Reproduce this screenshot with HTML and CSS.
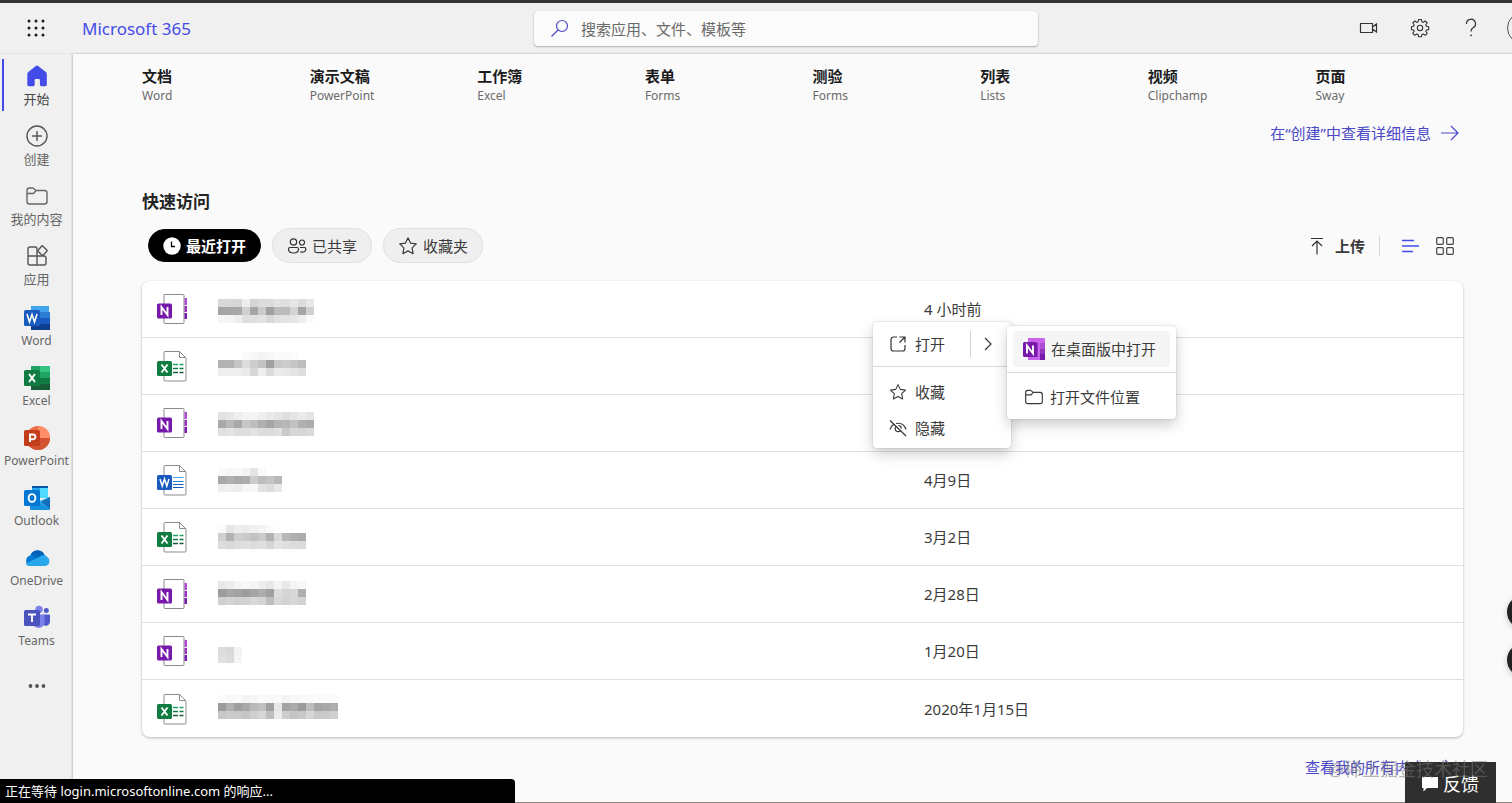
FILE: index.html
```html
<!DOCTYPE html>
<html lang="zh-CN">
<head>
<meta charset="utf-8">
<title>Microsoft 365</title>
<link rel="stylesheet" href="styles.css">
</head>
<body>
<svg class="defs" aria-hidden="true">
  <symbol id="note" viewBox="0 0 32 32">
    <path d="M8 1.500h19a1 1 0 0 1 1 1v27a1 1 0 0 1-1 1H9a1 1 0 0 1-1-1v-27z" fill="#fff" stroke="#8b8b8b"/>
    <path d="M28.500 5h2.500v7h-2.500z" fill="#ae4bd5"/><path d="M28.500 13h2.500v6h-2.500z" fill="#9332bf"/><path d="M28.500 20h2.500v6h-2.500z" fill="#7719aa"/>
    <rect x="1" y="10.500" width="15" height="15" rx="1.500" fill="#7719aa"/>
    <path d="M5.500 22v-8l6 8v-8" fill="none" stroke="#fff" stroke-width="1.900"/>
  </symbol>
  <symbol id="sheet" viewBox="0 0 32 32">
    <path d="M8.500 1.500h15l6.500 6.500v22a1 1 0 0 1-1 1h-20a1 1 0 0 1-1-1v-28z" fill="#fff" stroke="#8b8b8b"/><path d="M23.500 1.500v6h6.500" fill="none" stroke="#8b8b8b"/>
    <path d="M17 14.500h5m1.500 0h4" stroke="#21a366" stroke-width="1.700"/><path d="M17 18.500h5m1.500 0h4" stroke="#107c41" stroke-width="1.700"/><path d="M17 22.500h5m1.500 0h4" stroke="#185c37" stroke-width="1.700"/>
    <rect x="1" y="11" width="15" height="15" rx="1.500" fill="#107c41"/>
    <path d="M5.500 14.500l6 8m0-8l-6 8" stroke="#fff" stroke-width="1.900"/>
  </symbol>
  <symbol id="doc" viewBox="0 0 32 32">
    <path d="M8.500 1.500h15l6.500 6.500v22a1 1 0 0 1-1 1h-20a1 1 0 0 1-1-1v-28z" fill="#fff" stroke="#8b8b8b"/><path d="M23.500 1.500v6h6.500" fill="none" stroke="#8b8b8b"/>
    <path d="M17 13.500h10.500" stroke="#41a5ee"/><path d="M17 17.500h10.500" stroke="#2b7cd3"/><path d="M17 20.500h10.500M17 23.500h10.500" stroke="#185abd"/>
    <rect x="1" y="11" width="15" height="15" rx="1.500" fill="#185abd"/>
    <path d="M4 15l2.200 7 2.300-7 2.300 7 2.200-7" fill="none" stroke="#fff" stroke-width="1.500"/>
  </symbol>
  <symbol id="star" viewBox="0 0 20 20"><path d="M10 1.800l2.500 5.300 5.800.8-4.200 4 1 5.800-5.100-2.800-5.100 2.800 1-5.800-4.200-4 5.800-.8z" fill="none" stroke="currentColor" stroke-width="1.200" stroke-linejoin="round"/></symbol>
  <symbol id="folder" viewBox="0 0 24 24"><path d="M2 6.500A2.500 2.500 0 0 1 4.500 4H8l3 2.500h8.500A2.500 2.500 0 0 1 22 9v8.500a2.500 2.500 0 0 1-2.500 2.500h-15A2.500 2.500 0 0 1 2 17.500zM2 9.500h6.500l2.500-3" fill="none" stroke="currentColor" stroke-width="1.400" stroke-linejoin="round"/></symbol>
</svg>

<header class="topbar">
  <button class="waffle" aria-label="应用启动器"><svg width="18" height="18" viewBox="0 0 18 18" fill="#1b1b1b"><circle cx="2" cy="2" r="1.500"/><circle cx="9" cy="2" r="1.500"/><circle cx="16" cy="2" r="1.500"/><circle cx="2" cy="9" r="1.500"/><circle cx="9" cy="9" r="1.500"/><circle cx="16" cy="9" r="1.500"/><circle cx="2" cy="16" r="1.500"/><circle cx="9" cy="16" r="1.500"/><circle cx="16" cy="16" r="1.500"/></svg></button>
  <a class="brand" href="#">Microsoft 365</a>
  <form class="search">
    <svg width="18" height="18" viewBox="0 0 18 18" fill="none" stroke="#4b48c8" stroke-width="1.200"><circle cx="11" cy="7" r="5.500"/><path d="M7 11l-6.500 6.500"/></svg>
    <input type="text" aria-label="搜索" placeholder="搜索应用、文件、模板等">
  </form>
  <div class="tools">
    <button aria-label="会议"><svg width="20" height="20" viewBox="0 0 20 20" fill="none" stroke="#333" stroke-width="1.200"><path d="M1.500 5.500h12v9h-12zM13.500 9l4-3v8l-4-3"/></svg></button>
    <button aria-label="设置"><svg width="20" height="20" viewBox="0 0 20 20" fill="none" stroke="#333" stroke-width="1.100" stroke-linejoin="round"><path d="M8.500 1.500h3l.4 2.300 1.300.6 2-1.400 2 2-1.400 2 .6 1.300 2.300.4v2.900l-2.300.4-.6 1.300 1.400 2-2 2-2-1.400-1.300.6-.4 2.200h-3l-.4-2.200-1.300-.6-2 1.400-2-2 1.400-2-.6-1.300-2.200-.4V8.700l2.200-.4.600-1.300-1.400-2 2-2 2 1.400 1.300-.6z"/><circle cx="10" cy="10" r="2.700"/></svg></button>
    <button aria-label="帮助"><svg width="20" height="20" viewBox="0 0 20 20" fill="none" stroke="#333" stroke-width="1.200"><path d="M5.500 6A4.500 4.500 0 1 1 12 9.800c-1.500 1-2 1.700-2 3.700"/><circle cx="10" cy="17.300" r=".9" fill="#333" stroke="none"/></svg></button>
    <button class="avatar" aria-label="帐户"></button>
  </div>
</header>

<div class="shell">
  <nav class="rail" aria-label="应用">
    <a class="active" href="#"><svg width="24" height="24" viewBox="0 0 24 24"><path d="M10.800 2a2 2 0 0 1 2.400 0l7.300 5.700c.9.700 1.300 1.500 1.300 2.600v10.200c0 1.200-.6 1.700-1.700 1.700h-3.500c-1 0-1.700-.6-1.700-1.700v-4.300c0-.8-.5-1.200-1.200-1.200h-2.800c-.7 0-1.200.4-1.200 1.200v4.300c0 1.100-.7 1.700-1.700 1.700H4c-1.200 0-1.700-.5-1.700-1.700V10.300c0-1.100.4-1.900 1.300-2.600z" fill="#444ce7"/></svg><span>开始</span></a>
    <a href="#"><svg width="24" height="24" viewBox="0 0 24 24" fill="none" stroke="#555" stroke-width="1.400"><circle cx="12" cy="12" r="10"/><path d="M12 7v10M7 12h10"/></svg><span>创建</span></a>
    <a href="#"><svg width="24" height="24"><use href="#folder"/></svg><span>我的内容</span></a>
    <a href="#"><svg width="24" height="24" viewBox="0 0 24 24" fill="none" stroke="#555" stroke-width="1.400" stroke-linejoin="round"><path d="M12 12V5a2 2 0 0 0-2-2H5a2 2 0 0 0-2 2v14a2 2 0 0 0 2 2h14a2 2 0 0 0 2-2v-5a2 2 0 0 0-2-2zM12 12v9M3 12h9"/><path d="M17.500 1.800l4.200 4.200a1 1 0 0 1 0 1.400l-3.500 3.500a1 1 0 0 1-1.400 0l-3.500-3.500a1 1 0 0 1 0-1.400l3.500-4a.5.500 0 0 1 .7-.2z" fill="#f0f0f0"/></svg><span>应用</span></a>
    <a href="#"><svg width="26" height="26" viewBox="0 0 26 26"><path d="M7 1h18v6H7z" fill="#41a5ee"/><path d="M7 7h19v6H7z" fill="#2b7cd3"/><path d="M7 13h19v6H7z" fill="#185abd"/><path d="M7 19h19v6H7z" fill="#103f91"/><rect y="5" width="16" height="16" rx="1.500" fill="#185abd"/><path d="M3 9l2.500 8L8 9.500l2.500 7.500L13 9" fill="none" stroke="#fff" stroke-width="1.600"/></svg><span>Word</span></a>
    <a href="#"><svg width="26" height="26" viewBox="0 0 26 26"><path d="M7 1h19v24H7z" fill="#21a366"/><path d="M16 1h10v6H16z" fill="#33c481"/><path d="M7 7h9v6H7z" fill="#107c41"/><path d="M7 13h9v12H7zM16 19h10v6H16z" fill="#185c37"/><path d="M16 13h10v6H16z" fill="#107c41"/><rect y="5" width="16" height="16" rx="1.500" fill="#107c41"/><path d="M5 9l6 8m0-8l-6 8" stroke="#fff" stroke-width="2"/></svg><span>Excel</span></a>
    <a href="#"><svg width="26" height="26" viewBox="0 0 26 26"><circle cx="14" cy="13" r="12" fill="#ed6c47"/><path d="M14 1a12 12 0 0 1 12 12H14z" fill="#ff8f6b"/><path d="M2 13h24a12 12 0 0 1-24 0z" fill="#d35230"/><rect y="5" width="16" height="16" rx="1.500" fill="#c43e1c"/><path d="M6 17V9.500h3a2.400 2.400 0 0 1 0 4.800H6" fill="none" stroke="#fff" stroke-width="1.900"/></svg><span>PowerPoint</span></a>
    <a href="#"><svg width="26" height="26" viewBox="0 0 26 26"><path d="M8 1h16v12H8z" fill="#28a8ea"/><path d="M8 1h16v2H8z" fill="#0358a7"/><path d="M16 3h8v10h-8z" fill="#50d9ff"/><path d="M8 9h8v8H8z" fill="#0078d4"/><path d="M26 12v12a1 1 0 0 1-1 1H7a1 1 0 0 1-1-1V12l10 6z" fill="#1490df"/><path d="M26 12v12L13 17z" fill="#28a8ea"/><path d="M26 12l-9 5 9 7z" fill="#0f6fbd"/><rect y="5" width="16" height="16" rx="1.500" fill="#0078d4"/><ellipse cx="8" cy="13" rx="3.400" ry="3.900" fill="none" stroke="#fff" stroke-width="1.900"/></svg><span>Outlook</span></a>
    <a href="#"><svg width="26" height="26" viewBox="0 0 26 26"><path d="M6 11a8 8 0 0 1 14.500-1A6.500 6.500 0 0 1 21 21H6A5.500 5.500 0 0 1 6 10.500z" fill="#0078d4"/><path d="M7 9a7.500 7.500 0 0 1 13.500 1c-2 0-3 .5-4 1.200L13 13z" fill="#0364b8"/><path d="M16 11.500a6 6 0 0 1 9 7A5 5 0 0 1 21 21H6a5.500 5.500 0 0 1-4.500-2.300z" fill="#28a8ea"/></svg><span>OneDrive</span></a>
    <a href="#"><svg width="26" height="26" viewBox="0 0 26 26"><circle cx="22.300" cy="5.500" r="2.500" fill="#5059c9"/><circle cx="15" cy="4.500" r="3.700" fill="#7b83eb"/><path d="M19 9.500h6a1 1 0 0 1 1 1V16a4.500 4.500 0 0 1-7 4z" fill="#5059c9"/><path d="M9 9.500h10.500a1 1 0 0 1 1 1V17a6 6 0 0 1-12 0z" fill="#7b83eb"/><rect y="5" width="16" height="16" rx="1.500" fill="#4b53bc"/><path d="M4 9.500h8M8 9.500V17" stroke="#fff" stroke-width="1.900"/></svg><span>Teams</span></a>
    <button aria-label="更多"><svg width="18" height="6" viewBox="0 0 18 6" fill="#555"><circle cx="2.500" cy="3" r="1.900"/><circle cx="9" cy="3" r="1.900"/><circle cx="15.500" cy="3" r="1.900"/></svg></button>
  </nav>

  <main class="content">
    <section class="create">
      <a href="#"><strong>文档</strong><span>Word</span></a>
      <a href="#"><strong>演示文稿</strong><span>PowerPoint</span></a>
      <a href="#"><strong>工作簿</strong><span>Excel</span></a>
      <a href="#"><strong>表单</strong><span>Forms</span></a>
      <a href="#"><strong>测验</strong><span>Forms</span></a>
      <a href="#"><strong>列表</strong><span>Lists</span></a>
      <a href="#"><strong>视频</strong><span>Clipchamp</span></a>
      <a href="#"><strong>页面</strong><span>Sway</span></a>
    </section>
    <a class="more" href="#">在“创建”中查看详细信息<svg width="18" height="18" viewBox="0 0 18 18"><path d="M0 9h17M10 2l7 7-7 7" fill="none" stroke="currentColor" stroke-width="1.200"/></svg></a>
    <h2>快速访问</h2>
    <div class="bar">
      <div class="tabs">
        <button class="tab selected"><svg width="18" height="18" viewBox="0 0 18 18"><circle cx="9" cy="9" r="8.700" fill="#fff"/><path d="M8.500 4.500v5H12" fill="none" stroke="#000" stroke-width="1.300"/></svg>最近打开</button>
        <button class="tab"><svg width="20" height="18" viewBox="0 0 20 18" fill="none" stroke="#333" stroke-width="1.200"><circle cx="6.500" cy="5" r="3.200"/><circle cx="15" cy="5.500" r="2.500"/><path d="M3 10.500h7a1.500 1.500 0 0 1 1.500 1.500c0 2.500-2 4-5 4s-5-1.500-5-4A1.500 1.500 0 0 1 3 10.500zM13 10.500h4.500a1.300 1.300 0 0 1 1.300 1.500c0 2-1.800 3.200-3.800 3.200-.8 0-1.500-.1-2-.4"/></svg>已共享</button>
        <button class="tab"><svg width="20" height="20"><use href="#star"/></svg>收藏夹</button>
      </div>
      <div class="views">
        <button class="upload"><svg width="14" height="20" viewBox="0 0 14 20"><path d="M1 2.500h12M7 18.500V5M2 10l5-5 5 5" fill="none" stroke="#333" stroke-width="1.200"/></svg>上传</button>
        <button aria-label="列表视图"><svg width="18" height="16" viewBox="0 0 18 16"><path d="M1 2.500h12M1 8h17M1 13.500h11" stroke="#444ce7" stroke-width="1.500"/></svg></button>
        <button aria-label="网格视图"><svg width="18" height="18" viewBox="0 0 18 18" fill="none" stroke="#444" stroke-width="1.200"><rect x=".7" y=".7" width="6.600" height="6.600" rx="1"/><rect x="10.700" y=".7" width="6.600" height="6.600" rx="1"/><rect x=".7" y="10.700" width="6.600" height="6.600" rx="1"/><rect x="10.700" y="10.700" width="6.600" height="6.600" rx="1"/></svg></button>
      </div>
    </div>

    <table class="files">
      <tbody>
        <tr><td class="kind"><svg width="32" height="32"><use href="#note"/></svg></td><td class="name"><svg class="mosaic" width="132" height="32" data-row="0"></svg></td>
          <td class="date">4 小时前
            <div class="menu">
              <div class="split">
                <button class="item"><svg width="18" height="18" viewBox="0 0 18 18" fill="none" stroke="#333" stroke-width="1.200"><path d="M8 2H4.500A2.500 2.500 0 0 0 2 4.500v9A2.500 2.500 0 0 0 4.500 16h9a2.500 2.500 0 0 0 2.500-2.500V10M10.500 2H16v5.500M16 2l-5.500 5.500"/></svg>打开</button>
                <button class="expand" aria-label="更多打开方式"><svg width="8" height="14" viewBox="0 0 8 14"><path d="M1 1l6 6-6 6" fill="none" stroke="#333" stroke-width="1.200"/></svg></button>
              </div>
              <div class="group">
                <button class="item"><svg width="18" height="18"><use href="#star"/></svg>收藏</button>
                <button class="item"><svg width="18" height="18" viewBox="0 0 18 18" fill="none" stroke="#333" stroke-width="1.200"><path d="M1 1.500L17 17M7 4.500C12 3.500 15.500 6 17 10.500M4.500 5.500C2.500 6.800 1.500 8.500 1 10.500M11.500 11.500A3 3 0 1 1 7.300 7.300M9.500 6.500a3 3 0 0 1 2.800 3"/></svg>隐藏</button>
              </div>
              <div class="submenu">
                <div><button class="item hover"><svg width="22" height="22" viewBox="0 0 22 22"><path d="M5 0h16a1 1 0 0 1 1 1v20a1 1 0 0 1-1 1H5z" fill="#ca64ea"/><path d="M17 5h5v6h-5z" fill="#ae4bd5"/><path d="M17 11h5v5h-5z" fill="#9332bf"/><path d="M17 16h5v6h-5z" fill="#7719aa"/><path d="M5 5h10v14H5z" fill="#9a39c5"/><rect y="4" width="14" height="15" rx="1.500" fill="#7719aa"/><path d="M4 15.500V7.500l6 8v-8" fill="none" stroke="#fff" stroke-width="1.900"/></svg>在桌面版中打开</button></div>
                <div><button class="item"><svg width="20" height="20"><use href="#folder"/></svg>打开文件位置</button></div>
              </div>
            </div>
          </td></tr>
        <tr><td class="kind"><svg width="32" height="32"><use href="#sheet"/></svg></td><td class="name"><svg class="mosaic" width="132" height="32" data-row="1"></svg></td><td class="date"></td></tr>
        <tr><td class="kind"><svg width="32" height="32"><use href="#note"/></svg></td><td class="name"><svg class="mosaic" width="132" height="32" data-row="2"></svg></td><td class="date"></td></tr>
        <tr><td class="kind"><svg width="32" height="32"><use href="#doc"/></svg></td><td class="name"><svg class="mosaic" width="132" height="32" data-row="3"></svg></td><td class="date">4月9日</td></tr>
        <tr><td class="kind"><svg width="32" height="32"><use href="#sheet"/></svg></td><td class="name"><svg class="mosaic" width="132" height="32" data-row="4"></svg></td><td class="date">3月2日</td></tr>
        <tr><td class="kind"><svg width="32" height="32"><use href="#note"/></svg></td><td class="name"><svg class="mosaic" width="132" height="32" data-row="5"></svg></td><td class="date">2月28日</td></tr>
        <tr><td class="kind"><svg width="32" height="32"><use href="#note"/></svg></td><td class="name"><svg class="mosaic" width="132" height="32" data-row="6"></svg></td><td class="date">1月20日</td></tr>
        <tr><td class="kind"><svg width="32" height="32"><use href="#sheet"/></svg></td><td class="name"><svg class="mosaic" width="132" height="32" data-row="7"></svg></td><td class="date">2020年1月15日</td></tr>
      </tbody>
    </table>
    <a class="more all" href="#">查看我的所有内容<svg width="18" height="18" viewBox="0 0 18 18"><path d="M0 9h17M10 2l7 7-7 7" fill="none" stroke="currentColor" stroke-width="1.200"/></svg></a>
  </main>
</div>

<div class="bubbles"><i></i><i></i></div>
<button class="feedback"><svg width="16" height="16" viewBox="0 0 16 16"><path d="M0 1h16v11H5l-3.500 3.500V12H0z" fill="#fff"/></svg>反馈</button>
<div class="watermark">@稀土掘金技术社区</div>
<div class="status">正在等待 login.microsoftonline.com 的响应...</div>
<script src="mosaic.js"></script>
</body>
</html>
```

FILE: styles.css
```css
* { box-sizing: border-box; }
body {
  margin: 0;
  height: 100vh;
  overflow: hidden;
  display: flex;
  flex-direction: column;
  border-top: 3px solid #353232;
  border-bottom: 1px solid #8c8886;
  background: #f0f0f0;
  color: #3b3b3b;
  font: 15px/20px "Noto Sans", "Noto Sans CJK SC", sans-serif;
}
button { border: 0; padding: 0; background: none; font: inherit; color: inherit; }
a { color: inherit; text-decoration: none; }
svg { display: block; flex: none; }
.defs { position: absolute; width: 0; height: 0; }

.topbar {
  flex: none;
  height: 51px;
  display: grid;
  grid-template-columns: 1fr 504px 1fr;
  grid-template-areas: "left search tools";
  align-items: center;
  border-bottom: 1px solid #e4e4e4;
}
.waffle { grid-area: left; width: 72px; display: flex; justify-content: center; }
.brand { grid-area: left; margin-left: 82px; padding-top: 2px; font-size: 17px; color: #444ce7; }
.search {
  grid-area: search;
  width: 504px;
  height: 35px;
  margin-left: 30px;
  padding: 0 17px;
  display: flex;
  align-items: center;
  gap: 12px;
  background: #fbfbfb;
  border-radius: 4px;
  box-shadow: 0 1px 2px #0004, 0 0 1px #0003;
}
.search input { flex: 1; border: 0; padding: 2px 0 0; background: none; font: inherit; outline: 0; }
.search input::placeholder { color: #6a6a6a; opacity: 1; }
.tools { grid-area: tools; display: flex; justify-content: flex-end; align-items: center; gap: 31px; margin-right: -27px; }
.tools .avatar { width: 32px; height: 32px; margin-left: -5px; border: 1px solid #555; border-radius: 50%; }

.shell { flex: 1; min-height: 0; display: flex; }
.rail { flex: none; width: 73px; padding-top: 5px; display: flex; flex-direction: column; gap: 8px; }
.rail a {
  height: 52px;
  flex: none;
  display: flex;
  flex-direction: column;
  align-items: center;
  justify-content: space-between;
  padding: 5px 0 2px;
  font-size: 12px;
  line-height: 18px;
  color: #666;
  white-space: nowrap;
}
.rail a:nth-child(-n+4) { padding-bottom: 3px; font-size: 13px; }
.rail a:nth-child(5) { margin-top: 1px; }
.rail a.active { border-left: 2px solid #444ce7; margin-left: 2px; padding-right: 4px; color: #444; }
.rail button { height: 52px; display: flex; align-items: center; justify-content: center; }

.content {
  flex: 1;
  min-width: 0;
  padding: 12px 49px 0 69px;
  background: #fafafa;
  box-shadow: -1px 0 2px #0003;
  display: flex;
  flex-direction: column;
}
.create { display: grid; grid-template-columns: repeat(8, 1fr); gap: 20px; }
.create a { display: flex; flex-direction: column; }
.create strong { color: #1b1b1b; }
.create span { font-size: 12px; line-height: 20px; color: #6a6a6a; }
.more { align-self: flex-end; display: flex; align-items: center; gap: 10px; margin: 17px 4px 0 0; color: #4b48c8; }
h2 { margin: 49px 0 0; font-size: 17px; line-height: 20px; color: #242424; }
.bar { display: flex; justify-content: space-between; align-items: center; margin: 16px 0 18px; }
.tabs { display: flex; align-items: center; gap: 11px; padding-left: 6px; }
.tab { display: flex; align-items: center; gap: 5px; height: 35px; padding: 0 14px; border: 1px solid #e0e0e0; border-radius: 18px; background: #efefef; }
.tab.selected { height: 33px; border-color: #000; background: #000; color: #fff; font-weight: 700; }
.views { display: flex; align-items: center; gap: 17px; padding-right: 9px; }
.upload { display: flex; align-items: center; gap: 11px; padding-right: 14px; margin-right: 4px; border-right: 1px solid #d6d6d6; font-weight: 700; }

.files {
  width: 100%;
  table-layout: fixed;
  border-spacing: 0;
  background: #fff;
  border-radius: 8px;
  box-shadow: 0 1px 3px #0004;
}
.files td { height: 57px; padding: 0; border-bottom: 1px solid #dfdfdf; }
.files tr:last-child td { border-bottom: 0; }
.files .kind { width: 68px; padding-left: 14px; }
.files .name { width: 663px; }
.files .date { position: relative; padding-left: 51px; }
.mosaic { overflow: visible; }

.menu, .submenu { position: absolute; background: #fff; border-radius: 4px; box-shadow: 0 6px 14px #0003, 0 0 2px #0003; }
.menu { z-index: 1; left: 0; top: 41px; width: 138px; }
.submenu { left: 134px; top: 4px; width: 169px; }
.item { display: flex; align-items: center; gap: 8px; height: 36px; white-space: nowrap; }
.split { display: flex; height: 45px; padding-left: 16px; align-items: center; border-bottom: 1px solid #d9d9d9; }
.split .item { flex: 1; }
.expand { width: 41px; height: 26px; padding-left: 13px; border-left: 1px solid #d0d0d0; }
.group { padding: 7px 16px 2px; }
.submenu > div { padding: 5px 6px; }
.submenu > div + div { border-top: 1px solid #d9d9d9; padding: 6px 17px 4px; }
.submenu .item { width: 100%; gap: 6px; }
.submenu .hover { padding-left: 10px; background: #f5f5f5; border-radius: 4px; }

.more.all { margin: 20px 10px 0 0; }
.bubbles { position: fixed; right: -29px; top: 595px; display: grid; gap: 14px; }
.bubbles i { width: 34px; height: 34px; border-radius: 50%; background: #222; box-shadow: 0 2px 6px #0003; }
.feedback {
  position: fixed; right: 16px; bottom: 0;
  display: flex; align-items: center; gap: 5px;
  height: 41px; padding: 2px 17px 0;
  background: #2f2f2f; color: #fff; font-size: 18px;
}
.watermark { position: fixed; right: 24px; bottom: 22px; font-size: 18px; line-height: 24px; color: #7778; }
.status {
  position: fixed; left: 0; bottom: 0;
  width: 515px; height: 24px; padding: 2px 5px;
  background: #000; color: #fff; font-size: 13px;
  border-top-right-radius: 4px;
}
```

FILE: mosaic.js
```javascript
// Redacted file names: each row is [top offset, then strips of 8px cells].
// A cell is a two-digit grey level; "--" leaves the cell empty.
const rows = [
  [6, "d8 d8 d6 ee d4 dc dc e2 df e6 dc e8", "a4 a6 a8 d0 a6 ca a0 bc bb d4 a6 d0", "f6 f4 ee de e0 e4 d8 e2 e4 e6 ee fa"],
  [2, "ff ff ff fa f8 f4 f6 fa fa fc ff", "b2 b2 c4 dc ce c2 a0 c8 cd c6 bd", "ee ee ee ea d8 ee dc ea e8 e4 de"],
  [5, "e2 e6 ee f3 f4 ef ea e5 df e5 ea e4", "a8 b8 a9 c7 bd af a5 b5 b7 c2 b0 ac", "e0 e4 de dc e2 dd dc e0 ca d8 d6 da"],
  [4, "fa f6 f8 f3 e4 fa -- --", "a8 b0 a9 ad cc bc c4 b8", "ee f0 ed f6 f7 e2 dc e8"],
  [4, "fa e6 ee ec f0 f4 fa -- -- -- --", "d0 b2 cf ca c2 cb b2 d8 b8 b0 ac", "dd d9 dd e0 dc df d5 e4 df dc da"],
  [3, "e8 ec f4 f8 f6 ee e8 f4 e8 f4 f8", "9c a6 a3 9d a5 ad a0 dd d6 d8 b0", "d0 d4 d0 d2 d8 d4 be d8 d3 d7 d3"],
  [12, "dc d8 f2", "e0 dc f5"],
  [2, "fa f8 f9 f4 f6 fa f8 fa f4 f6 fa f9 fa fa fa", "9c b0 9f a8 b9 c0 a0 e6 a4 aa 9a bd a4 a8 ae", "c8 cb c9 c5 ce d6 be eb ce c4 c8 d6 c9 cb d0"]
];
document.querySelectorAll(".mosaic").forEach(svg => {
  const [top, ...strips] = rows[svg.dataset.row];
  strips.forEach((strip, r) => strip.split(" ").forEach((g, c) => {
    if (g === "--") return;
    const cell = document.createElementNS("http://www.w3.org/2000/svg", "rect");
    cell.setAttribute("x", 8 + c * 8);
    cell.setAttribute("y", top + r * 8);
    cell.setAttribute("width", 8);
    cell.setAttribute("height", 8);
    cell.setAttribute("fill", "#" + g + g + g);
    svg.append(cell);
  }));
});
```
